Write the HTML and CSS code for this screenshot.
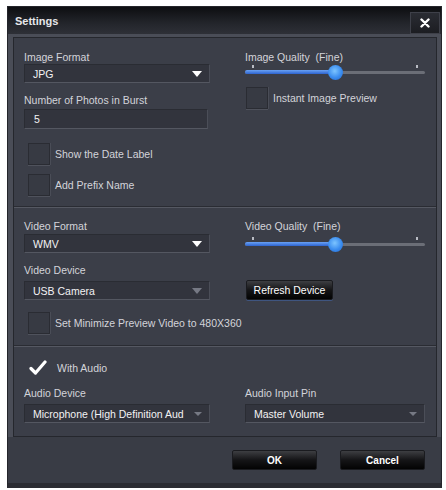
FILE: index.html
```html
<!DOCTYPE html>
<html>
<head>
<meta charset="utf-8">
<link rel="stylesheet" href="styles.css">
</head>
<body>
<div class="dialog">
  <div class="titlebar">
    <span class="title">Settings</span>
    <button class="close"><svg width="10" height="10" viewBox="0 0 10 10"><path d="M1.5 1.5 L8.5 8.5 M8.5 1.5 L1.5 8.5" stroke="#fff" stroke-width="2.4" stroke-linecap="round"/></svg></button>
  </div>
  <div class="panel">
    <section class="sec sec1">
      <div class="col">
        <div class="lbl">Image Format</div>
        <div class="select"><span>JPG</span><i class="tri"></i></div>
        <div class="lbl gap10">Number of Photos in Burst</div>
        <div class="input"><span>5</span></div>
        <div class="chk chk-a"><span class="box"></span><span>Show the Date Label</span></div>
        <div class="chk chk-b"><span class="box"></span><span>Add Prefix Name</span></div>
      </div>
      <div class="col">
        <div class="lbl">Image Quality &nbsp;(Fine)</div>
        <div class="slider"><i class="tick tl"></i><i class="tick tr"></i><div class="track"><div class="fill"></div><i class="thumb"></i></div></div>
        <div class="chk chk-c"><span class="box"></span><span class="lpad">Instant Image Preview</span></div>
      </div>
    </section>
    <div class="sep"></div>
    <section class="sec sec2">
      <div class="col">
        <div class="lbl">Video Format</div>
        <div class="select s1"><span>WMV</span><i class="tri"></i></div>
        <div class="lbl gap10">Video Device</div>
        <div class="select s4"><span>USB Camera</span><i class="tri dim"></i></div>
      </div>
      <div class="col">
        <div class="lbl">Video Quality &nbsp;(Fine)</div>
        <div class="slider s3"><i class="tick tl"></i><i class="tick tr"></i><div class="track"><div class="fill"></div><i class="thumb"></i></div></div>
        <button class="btn refresh">Refresh Device</button>
      </div>
      <div class="chk wide"><span class="box"></span><span>Set Minimize Preview Video to 480X360</span></div>
    </section>
    <div class="sep"></div>
    <section class="sec sec3">
      <div class="chk audio"><svg class="check" width="18" height="16" viewBox="0 0 18 16"><path d="M2 8.5 L6.5 13 L16 2" fill="none" stroke="#fff" stroke-width="3.2" stroke-linecap="round" stroke-linejoin="round"/></svg><span>With Audio</span></div>
      <div class="col">
        <div class="lbl">Audio Device</div>
        <div class="select s4"><span>Microphone (High Definition Aud</span><i class="tri dim sm"></i></div>
      </div>
      <div class="col">
        <div class="lbl">Audio Input Pin</div>
        <div class="select s4 wide2"><span>Master Volume</span><i class="tri dim sm"></i></div>
      </div>
    </section>
  </div>
  <div class="footer">
    <button class="btn big">OK</button>
    <button class="btn big">Cancel</button>
  </div>
</div>
</body>
</html>
```
FILE: styles.css
```css
* { box-sizing: border-box; }
body {
  margin: 0;
  background: #ffffff;
  font-family: "Liberation Sans", Arial, sans-serif;
  font-size: 10.5px;
  color: #d3d4da;
}
.dialog {
  margin: 6px 0 0 7px;
  width: 435px;
  height: 482px;
  background: #4a4d57;
  border: 1px solid #24252b;
  border-bottom: 5px solid #2b2c32;
  display: flex;
  flex-direction: column;
}
.titlebar {
  height: 27px;
  background: linear-gradient(#0d0e11, #23252b 60%, #2e3037);
  display: flex;
  align-items: center;
  justify-content: space-between;
  padding: 0 1px 0 7px;
}
.title {
  font-weight: bold;
  font-size: 11px;
  color: #e6e7ea;
}
.close {
  width: 30px;
  height: 22px;
  margin-top: 5px;
  background: linear-gradient(#2a2c33, #1c1d22);
  border: 1px solid #3e4049;
  display: flex;
  align-items: center;
  justify-content: center;
  padding: 0;
}
.panel {
  margin: 3px 4px 0 5px;
  background: #3b3e48;
  border: 1px solid #25272d;
}
.sec {
  display: grid;
  grid-template-columns: 186px 180px;
  column-gap: 35px;
  padding-left: 10px;
}
.sec1 { padding-top: 12px; padding-bottom: 10px; }
.sec2 { padding-top: 11px; padding-bottom: 11px; row-gap: 12px; }
.sec3 { padding-top: 10px; padding-bottom: 13px; row-gap: 7px; }
.col { display: flex; flex-direction: column; align-items: flex-start; }
.lbl { line-height: 14px; height: 14px; white-space: nowrap; }
.gap10 { margin-top: 10px; }
.sep {
  height: 2px;
  border-top: 1px solid #2a2c33;
  border-bottom: 1px solid #555862;
}
.select, .input {
  width: 186px;
  height: 19px;
  background: #32343d;
  border: 1px solid #2a2c33;
  border-bottom-color: #545761;
  border-right-color: #4b4e58;
  display: flex;
  align-items: center;
  justify-content: space-between;
  padding: 0 7px 0 8px;
  color: #f2f2f4;
  white-space: nowrap;
}
.input { width: 184px; height: 20px; margin-top: 2px; padding-left: 9px; }
.sec2 .select.s1 { margin-top: 1px; }
.select.s4 { margin-top: 4px; }
.select.wide2 { width: 180px; }
.tri {
  width: 0; height: 0;
  border-left: 5px solid transparent;
  border-right: 5px solid transparent;
  border-top: 6px solid #ffffff;
}
.tri.dim { border-top-color: #767984; }
.tri.sm { border-left-width: 4px; border-right-width: 4px; border-top-width: 4px; }
.chk {
  display: flex;
  align-items: center;
  gap: 5px;
  height: 22px;
  padding-left: 4px;
  white-space: nowrap;
}
.chk-a { margin-top: 14px; }
.chk-b { margin-top: 9px; }
.chk-c { margin-top: 7px; padding-left: 1px; }
.box {
  width: 22px;
  height: 22px;
  background: #373a43;
  border: 1px solid #2a2c33;
  box-shadow: 0 1px 0 #4f525c, 1px 0 0 #4a4d57;
}
.lpad { margin-left: 0; }
.wide { grid-column: 1 / -1; }
.audio { grid-column: 1 / -1; padding-left: 5px; gap: 10px; }
.check { display: block; }
.slider {
  position: relative;
  width: 180px;
  height: 16px;
  display: flex;
  align-items: center;
}
.slider.s3 { margin-top: 3px; }
.track {
  position: relative;
  width: 100%;
  height: 3px;
  background: #6b6e77;
  border-radius: 2px;
}
.fill {
  width: 91px;
  height: 4px;
  margin-top: -0.5px;
  background: linear-gradient(#6aa2f4, #2d63cf);
  border-radius: 2px;
}
.thumb {
  position: absolute;
  left: 83px;
  top: -6px;
  width: 15px;
  height: 15px;
  border-radius: 50%;
  background: radial-gradient(circle at 45% 40%, #7cc4ff, #3a8cef 55%, #2466cc);
}
.tick {
  position: absolute;
  top: 1px;
  width: 2px;
  height: 3px;
  background: #b9bcc4;
}
.tl { left: 7px; }
.tr { left: 171px; }
.btn {
  font-family: "Liberation Sans", Arial, sans-serif;
  color: #ffffff;
  background: linear-gradient(#3d3e42, #151517 50%, #030303);
  border: 1px solid #1a1b1f;
  border-radius: 2px;
  padding: 0;
}
.refresh {
  width: 87px;
  height: 20px;
  margin-top: 28px;
  margin-left: 1px;
  font-size: 10.5px;
  box-shadow: 0 1px 0 #3f5580;
}
.footer {
  flex: 1;
  background: #393c45;
  display: flex;
  justify-content: flex-end;
  gap: 23px;
  padding: 13px 16px 0 0;
}
.big {
  width: 85px;
  height: 20px;
  font-weight: bold;
  font-size: 10px;
}
```
